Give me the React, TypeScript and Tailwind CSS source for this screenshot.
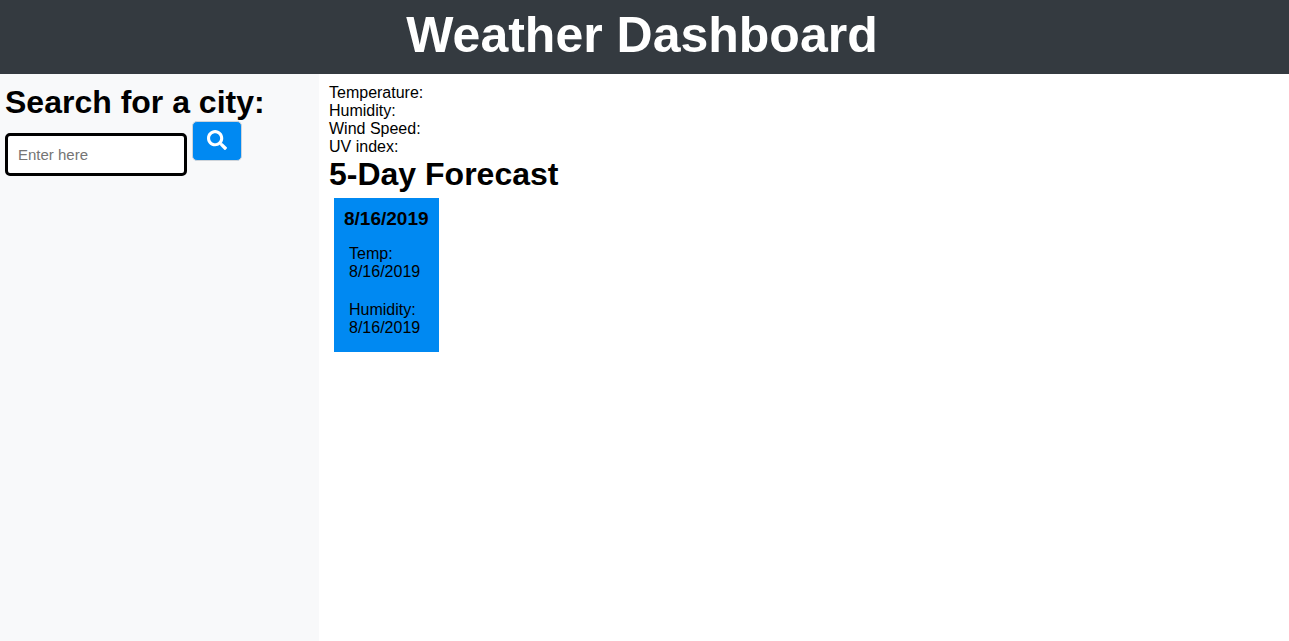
import { FaSearch } from "react-icons/fa";

const conditions = ["Temperature:", "Humidity:", "Wind Speed:", "UV index:"];
const forecast = [{ date: "8/16/2019", temp: "8/16/2019", humidity: "8/16/2019" }];

export default function App() {
  return (
    <div className="flex min-h-screen flex-col bg-white font-['Liberation_Sans',Arial,sans-serif] text-base leading-[18px] text-black">
      <header className="bg-[#343a40] pt-[7px] pr-[5px] pb-[11px] text-center">
        <h1 className="text-[50px] leading-[56px] font-bold text-white">Weather Dashboard</h1>
      </header>
      <div className="flex grow">
        <aside className="w-[319px] shrink-0 bg-[#f8f9fa] px-[5px] pt-2.5">
          <h2 className="text-[32px] leading-[37px] font-bold">
            <label htmlFor="city">Search for a city:</label>
          </h2>
          <form className="flex items-start gap-[5px]" onSubmit={(e) => e.preventDefault()}>
            <input
              id="city"
              type="text"
              placeholder="Enter here"
              className="mt-3 h-[43px] w-[182px] rounded-[5px] border-3 border-black bg-white px-2.5 text-[15px] outline-none placeholder:text-[#757575]"
            />
            <button
              type="submit"
              aria-label="Search"
              className="flex h-10 w-[50px] items-center justify-center rounded-[5px] border border-[#ced4da] bg-[#0089f2] pb-0.5 text-xl text-white"
            >
              <FaSearch />
            </button>
          </form>
        </aside>
        <main className="grow p-2.5">
          {conditions.map((label) => (
            <p key={label}>{label}</p>
          ))}
          <h2 className="text-[32px] leading-[37px] font-bold">5-Day Forecast</h2>
          <div className="flex flex-wrap gap-2.5 p-[5px]">
            {forecast.map((day) => (
              <article key={day.date} className="bg-[#0089f2] p-2.5">
                <h3 className="text-[19px] leading-[22px] font-bold">{day.date}</h3>
                <p className="mt-[15px] px-[5px]">
                  Temp:
                  <br />
                  {day.temp}
                </p>
                <p className="mt-5 px-[5px] pb-[5px]">
                  Humidity:
                  <br />
                  {day.humidity}
                </p>
              </article>
            ))}
          </div>
        </main>
      </div>
    </div>
  );
}
